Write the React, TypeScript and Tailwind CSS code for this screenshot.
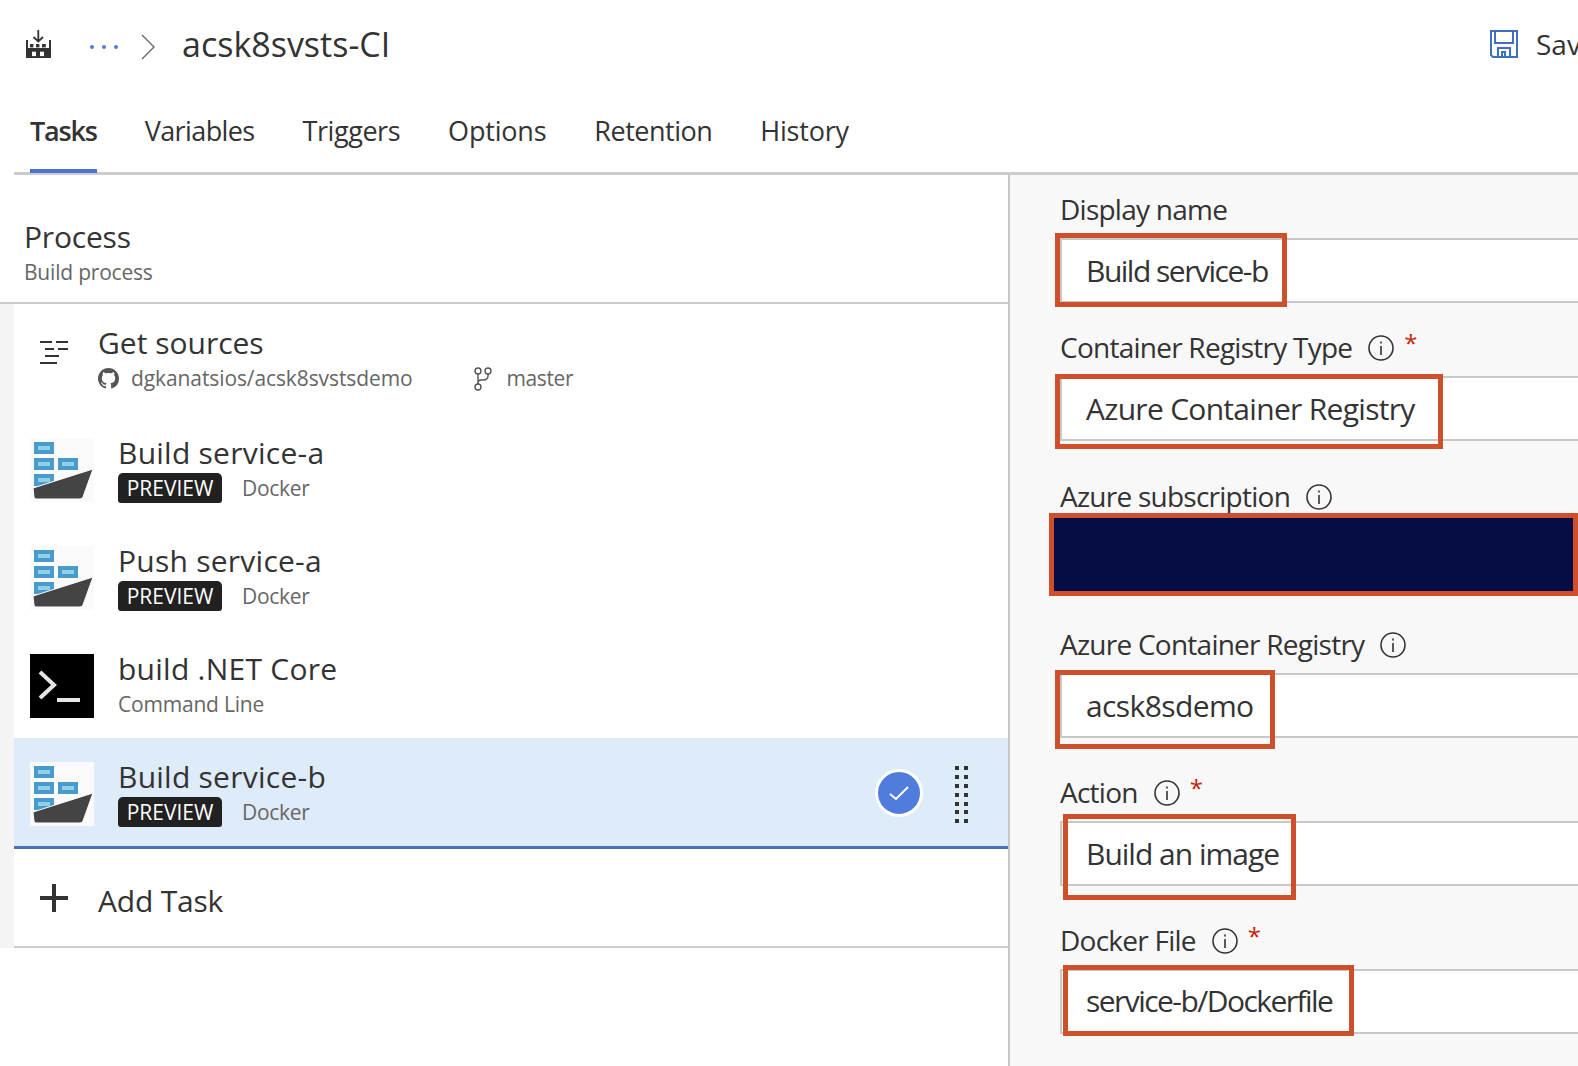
import { Fragment } from "react";

const font = { fontFamily: '"Open Sans", sans-serif' };

const tabs = [
  { name: "Tasks", className: "-mb-[1px] flex items-center border-b-[4px] border-[#4a73d0] pt-[4px] font-semibold tracking-[-1.2px]" },
  { name: "Variables", className: "flex items-center border-b-[4px] border-transparent pt-[5px] tracking-[-0.6px]" },
  { name: "Triggers", className: "flex items-center border-b-[4px] border-transparent pt-[5px] tracking-[-0.45px]" },
  { name: "Options", className: "flex items-center border-b-[4px] border-transparent pt-[5px] tracking-[-0.2px]" },
  { name: "Retention", className: "flex items-center border-b-[4px] border-transparent pt-[5px] tracking-[-0.5px]" },
  { name: "History", className: "flex items-center border-b-[4px] border-transparent pt-[5px] tracking-[-0.2px]" },
];

const DockerIcon = () => (
  <svg width="64" height="64" viewBox="0 0 64 64" className="shrink-0">
    <rect width="64" height="64" fill="#fafafa" />
    {[
      [4, 4],
      [4, 20],
      [28, 20],
      [4, 36],
    ].map(([x, y]) => (
      <Fragment key={`${x}-${y}`}>
        <rect x={x} y={y} width="20" height="12" fill="#4a9bcd" />
        <rect x={x + 4} y={y + 4} width="12" height="4" fill="#8fd0e6" />
      </Fragment>
    ))}
    <path
      d="M3 50 L63 31 L53 59 Q52 61 50 61 L6 61 Q4 61 4 59 Z"
      fill="#444444"
      stroke="#ffffff"
      strokeWidth="1"
    />
  </svg>
);

const TerminalIcon = () => (
  <svg width="64" height="64" viewBox="0 0 64 64" className="shrink-0">
    <rect width="64" height="64" fill="#000000" />
    <path d="M10 18 L24 31 L10 44" fill="none" stroke="#e6e6e6" strokeWidth="4" />
    <path d="M27 46 H50" stroke="#e6e6e6" strokeWidth="4" />
  </svg>
);

const InfoIcon = () => (
  <svg width="26" height="26" viewBox="0 0 26 26" className="shrink-0 translate-y-px">
    <circle cx="13" cy="13" r="12" fill="none" stroke="#333333" strokeWidth="1.6" />
    <rect x="12.2" y="11" width="1.6" height="9" fill="#333333" />
    <rect x="12.2" y="6.5" width="1.6" height="2" fill="#333333" />
  </svg>
);

const Badge = () => (
  <span className="flex h-[30px] w-[104px] items-center justify-center rounded-t-[5px] rounded-b-[3px] bg-[#212121] pt-px text-[21px] text-white">
    PREVIEW
  </span>
);

type TaskProps = { title: string; selected?: boolean };

const DockerTask = ({ title, selected }: TaskProps) => (
  <div
    className={
      selected
        ? "flex h-[111px] items-start border-b-[3px] border-[#4a73bd] bg-[#deebf8] pt-6 pl-4"
        : "flex h-[108px] items-start pt-6 pl-4"
    }
  >
    <DockerIcon />
    <div className="ml-6 flex flex-col">
      <div className="-mt-[5px] h-[38px] text-[30px] leading-[39px] tracking-[0.25px] text-[#333333]">{title}</div>
      <div className="flex items-center">
        <Badge />
        <span className="ml-5 pt-[2px] text-[21px] tracking-[-0.3px] text-[#666666]">Docker</span>
      </div>
    </div>
    {selected && (
      <div className="mt-[2px] mr-[40px] ml-auto flex items-center gap-[32px] self-start">
        <span className="flex h-12 w-12 items-center justify-center rounded-full border-[3px] border-white bg-[#507cdb]">
          <svg width="22" height="18" viewBox="0 0 22 18">
            <path d="M2 10 L8 15 L20 3" fill="none" stroke="#ffffff" strokeWidth="2" />
          </svg>
        </span>
        <span className="grid translate-y-[2px] grid-cols-2 gap-x-[5px] gap-y-[4.9px]">
          {Array.from({ length: 14 }).map((_, i) => (
            <span key={i} className="h-1 w-1 bg-[#333333]" />
          ))}
        </span>
      </div>
    )}
  </div>
);

type FieldProps = {
  label: string;
  info?: boolean;
  required?: boolean;
  value: string;
  valueClass?: string;
  boxClass: string;
  fieldClass: string;
};

const Field = ({ label, info, required, value, valueClass, boxClass, fieldClass }: FieldProps) => (
  <div className={fieldClass}>
    <div className="flex h-[40px] items-center gap-4 text-[28px] tracking-[-0.75px] text-[#333333]">
      {label}
      {info && <InfoIcon />}
      {required && <span className="-mt-2 -ml-[6px] text-[24px] text-[#c81e0a]">*</span>}
    </div>
    <div className="relative mt-[9px] flex h-[65px] items-center border-2 border-r-0 border-[#c8c8c8] bg-white pl-6 text-[30px] text-[#333333]">
      <span className={valueClass}>{value}</span>
      <div className={boxClass} />
    </div>
  </div>
);

export default function App() {
  return (
    <div style={font} className="flex h-[1066px] w-[1578px] flex-col overflow-hidden bg-white">
      <header className="flex h-[90px] shrink-0 items-center pb-[2px] pl-[26px]">
        <svg width="25" height="28" viewBox="0 0 25 28" className="shrink-0">
          <path d="M12.3 0 V11 M7.5 7 L12.3 11.5 L17 7" fill="none" stroke="#333333" strokeWidth="1.8" />
          <path d="M0 10 H2 V18 H23 V10 H25 V28 H0 Z" fill="#333333" />
          <rect x="4" y="14" width="3.4" height="3.4" fill="#333333" />
          <rect x="10" y="14" width="3.4" height="3.4" fill="#333333" />
          <rect x="16" y="14" width="3.8" height="3.4" fill="#333333" />
          <rect x="6" y="21.7" width="4" height="4.4" fill="#ffffff" />
          <rect x="14" y="21.7" width="4" height="4.4" fill="#ffffff" />
        </svg>
        <span className="mt-[6px] ml-[39px] flex gap-[8px]">
          <span className="h-[4px] w-[4px] rounded-full bg-[#4a7fdb]" />
          <span className="h-[4px] w-[4px] rounded-full bg-[#4a7fdb]" />
          <span className="h-[4px] w-[4px] rounded-full bg-[#4a7fdb]" />
        </span>
        <svg width="14" height="26" viewBox="0 0 14 26" className="mt-[5px] ml-[23px] shrink-0">
          <path d="M1 1 L13 13 L1 25" fill="none" stroke="#666666" strokeWidth="1.4" />
        </svg>
        <h1 className="ml-[27px] text-[34px] font-normal text-[#333333]">acsk8svsts-CI</h1>
        <div className="ml-auto flex shrink-0 items-center">
          <svg width="28" height="28" viewBox="0 0 28 28">
            <path
              d="M1 1 H27 V27 H3 L1 25 Z M5 1 V13 H23 V1 M8 27 V18 H20 V27 M12 27 V22 H15 V27"
              fill="none"
              stroke="#3f6fc0"
              strokeWidth="2"
            />
          </svg>
          <span className="ml-[18px] w-[42px] text-[28px] whitespace-nowrap text-[#333333]">Sav</span>
        </div>
      </header>

      <nav className="ml-[14px] flex h-[85px] shrink-0 items-stretch gap-[48px] border-b-[3px] border-[#cccccc] pl-4 text-[27px] text-[#333333]">
        {tabs.map((tab) => (
          <span key={tab.name} className={tab.className}>
            {tab.name}
          </span>
        ))}
      </nav>

      <main className="flex min-h-0 flex-1">
        <section className="w-[1008px] shrink-0">
          <div className="flex h-[129px] flex-col border-b-2 border-[#cccccc] pt-[41px] pl-6">
            <div className="h-[42px] text-[30px] leading-[42px] tracking-[-0.2px] text-[#333333]">Process</div>
            <div className="text-[21px] leading-[28px] tracking-[-0.2px] text-[#666666]">Build process</div>
          </div>
          <div className="w-[1008px] border-l-[14px] border-[#f4f4f4]">
            <div className="flex h-[110px] pt-[19px]">
              <svg width="28" height="24" viewBox="0 0 28 24" className="mt-[18px] ml-[26px] shrink-0">
                <path
                  d="M0 1 H12 M16 1 H28 M5 8 H14 M18 8 H28 M5 15 H19 M0 22 H17"
                  fill="none"
                  stroke="#333333"
                  strokeWidth="2"
                />
              </svg>
              <div className="ml-[30px]">
                <div className="h-[40px] text-[30px] leading-[40px] text-[#333333]">Get sources</div>
                <div className="flex items-center text-[21px] tracking-[-0.1px] text-[#666666]">
                  <svg width="21" height="21" viewBox="0 0 16 16" fill="#555555" className="shrink-0">
                    <path d="M8 0C3.58 0 0 3.58 0 8c0 3.54 2.29 6.53 5.47 7.59.4.07.55-.17.55-.38 0-.19-.01-.82-.01-1.49-2.01.37-2.53-.49-2.69-.94-.09-.23-.48-.94-.82-1.13-.28-.15-.68-.52-.01-.53.63-.01 1.08.58 1.23.82.72 1.21 1.87.87 2.33.66.07-.52.28-.87.51-1.07-1.78-.2-3.64-.89-3.64-3.95 0-.87.31-1.59.82-2.15-.08-.2-.36-1.02.08-2.12 0 0 .67-.21 2.2.82.64-.18 1.32-.27 2-.27s1.36.09 2 .27c1.53-1.04 2.2-.82 2.2-.82.44 1.1.16 1.92.08 2.12.51.56.82 1.27.82 2.15 0 3.07-1.87 3.75-3.65 3.95.29.25.54.73.54 1.48 0 1.07-.01 1.93-.01 2.2 0 .21.15.46.55.38A8.01 8.01 0 0 0 16 8c0-4.42-3.58-8-8-8z" />
                  </svg>
                  <span className="ml-3">dgkanatsios/acsk8svstsdemo</span>
                  <svg width="18" height="24" viewBox="0 0 18 24" className="ml-[61px] shrink-0">
                    <g fill="none" stroke="#555555" strokeWidth="1.4">
                      <circle cx="4" cy="4" r="3" />
                      <circle cx="14" cy="4" r="3" />
                      <circle cx="4" cy="20" r="3" />
                      <path d="M4 7 V17 M14 7 V9 Q14 13 9 13 H7 Q4 13 4 16" />
                    </g>
                  </svg>
                  <span className="ml-[15px] tracking-[-0.4px]">master</span>
                </div>
              </div>
            </div>
            <DockerTask title="Build service-a" />
            <DockerTask title="Push service-a" />
            <div className="flex h-[108px] items-start pt-6 pl-4">
              <TerminalIcon />
              <div className="ml-6 flex flex-col">
                <div className="-mt-[5px] h-[39px] text-[30px] leading-[39px] tracking-[0.25px] text-[#333333]">build .NET Core</div>
                <div className="mt-[1px] text-[21px] tracking-[-0.2px] text-[#666666]">Command Line</div>
              </div>
            </div>
            <DockerTask title="Build service-b" selected />
            <div className="flex h-[99px] items-center border-b-2 border-[#cccccc] pl-[26px]">
              <svg width="28" height="28" viewBox="0 0 28 28" className="mt-[1px] shrink-0">
                <path d="M14 0 V28 M0 14 H28" stroke="#333333" strokeWidth="4" />
              </svg>
              <span className="ml-[30px] pt-[5px] text-[30px] tracking-[-0.2px] text-[#333333]">Add Task</span>
            </div>
          </div>
        </section>

        <section className="min-w-0 flex-1 border-l-2 border-[#c8c8c8] bg-[#f8f8f8] pl-[50px]">
          <Field
            fieldClass="pt-[14px]"
            label="Display name"
            value="Build service-b"
            valueClass="tracking-[-1.5px]"
            boxClass="absolute -top-[7px] -left-[7px] h-[74px] w-[232px] border-[5px] border-[#cd4f2c]"
          />
          <Field
            fieldClass="mt-[24px]"
            label="Container Registry Type"
            info
            required
            value="Azure Container Registry"
            valueClass="tracking-[-0.7px]"
            boxClass="absolute -top-[4px] -left-[7px] h-[75px] w-[388px] border-[5px] border-[#cd4f2c]"
          />
          <Field
            fieldClass="mt-[35px]"
            label="Azure subscription"
            info
            value=""
            boxClass="absolute -top-[14px] -left-[13px] h-[83px] w-[529px] border-[5px] border-[#cd4f2c] bg-[#060d44]"
          />
          <Field
            fieldClass="mt-[34px]"
            label="Azure Container Registry"
            info
            value="acsk8sdemo"
            valueClass="tracking-[-0.6px]"
            boxClass="absolute -top-[5px] -left-[7px] h-[79px] w-[220px] border-[5px] border-[#cd4f2c]"
          />
          <Field
            fieldClass="mt-[34px]"
            label="Action"
            info
            required
            value="Build an image"
            valueClass="tracking-[-1px]"
            boxClass="absolute -top-[9px] left-[1px] h-[86px] w-[233px] border-[5px] border-[#cd4f2c]"
          />
          <Field
            fieldClass="mt-[34px]"
            label="Docker File"
            info
            required
            value="service-b/Dockerfile"
            valueClass="pb-[3px] tracking-[-1.55px]"
            boxClass="absolute -top-[6px] left-[1px] h-[71px] w-[291px] border-[5px] border-[#cd4f2c]"
          />
        </section>
      </main>
    </div>
  );
}
